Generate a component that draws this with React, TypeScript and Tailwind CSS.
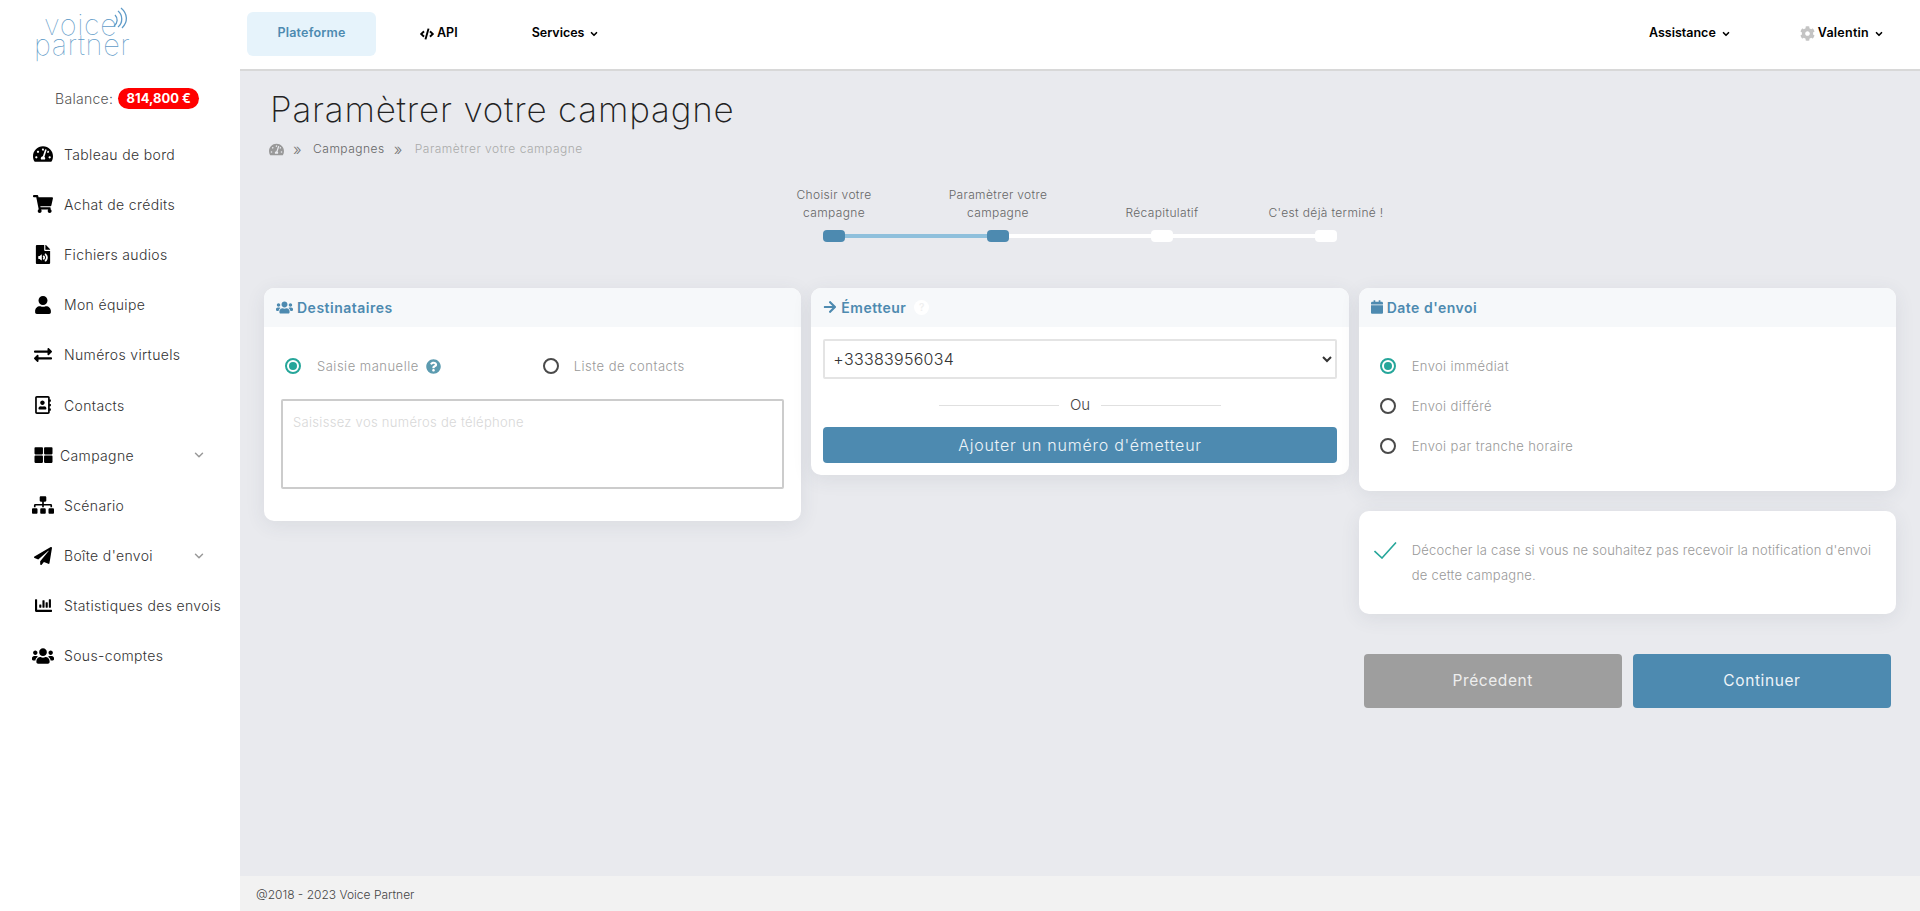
import React from "react";
import { ChevronDown } from "lucide-react";
import {
  FaTachometerAlt, FaShoppingCart, FaFileAudio, FaUser, FaExchangeAlt, FaRegAddressBook, FaThLarge,
  FaSitemap, FaPaperPlane, FaChartBar, FaUsers, FaCode, FaCog, FaQuestionCircle, FaArrowRight, FaCalendar,
} from "react-icons/fa";

const F = "font-['Inter','Liberation_Sans',sans-serif]";

const nav: { icon: React.ReactNode; label: string; chev?: boolean; gap?: string }[] = [
  { icon: <FaTachometerAlt className="w-[20px] h-[20px]" />, label: "Tableau de bord" },
  { icon: <FaShoppingCart className="w-[20px] h-[20px]" />, label: "Achat de crédits" },
  { icon: <FaFileAudio className="w-[16px] h-[19px]" />, label: "Fichiers audios" },
  { icon: <FaUser className="w-[18px] h-[18px]" />, label: "Mon équipe" },
  { icon: <FaExchangeAlt className="w-[18px] h-[18px]" />, label: "Numéros virtuels" },
  { icon: <FaRegAddressBook className="w-[18px] h-[18px]" />, label: "Contacts" },
  { icon: <FaThLarge className="w-[19px] h-[18px]" />, label: "Campagne", chev: true, gap: "w-[28px]" },
  { icon: <FaSitemap className="w-[22px] h-[20px]" />, label: "Scénario" },
  { icon: <FaPaperPlane className="w-[18px] h-[18px]" />, label: "Boîte d'envoi", chev: true },
  { icon: <FaChartBar className="w-[19px] h-[17px]" />, label: "Statistiques des envois" },
  { icon: <FaUsers className="w-[22px] h-[20px]" />, label: "Sous-comptes" },
];

function Radio({ on }: { on?: boolean }) {
  return on ? (
    <span className="w-[16px] h-[16px] rounded-full border-2 border-[#26a69a] flex items-center justify-center shrink-0">
      <span className="w-[8px] h-[8px] rounded-full bg-[#26a69a]" />
    </span>
  ) : (
    <span className="block w-[16px] h-[16px] rounded-full border-2 border-[#4a4a4a] shrink-0" />
  );
}

function Card({ icon, title, extra, children }: { icon: React.ReactNode; title: string; extra?: React.ReactNode; children: React.ReactNode }) {
  return (
    <div className="bg-white rounded-[10px] overflow-hidden shadow-[0_4px_20px_rgba(60,70,90,0.09)]">
      <div className="h-[39px] pb-[1px] bg-[#f6f8fa] flex items-center pl-[12px] gap-[4px] text-[#4d8ab0] text-[14px] font-semibold tracking-[0.5px]">
        {icon}
        <span>{title}</span>
        {extra}
      </div>
      {children}
    </div>
  );
}

const steps = [
  { t: ["Choisir votre", "campagne"], on: true },
  { t: ["Paramètrer votre", "campagne"], on: true },
  { t: ["Récapitulatif"], on: false },
  { t: ["C'est déjà terminé !"], on: false },
];

export default function App() {
  return (
    <div className={`${F} flex h-screen w-full overflow-hidden bg-[#e9eaee] text-[#333]`}>
      <aside className="w-[240px] shrink-0 bg-white flex flex-col">
        <div className="relative h-[88px] pl-[34px] pt-[15px] text-[#5f9bc8] text-[29px] font-thin leading-[20px] tracking-[0.6px]">
          <div className="pl-[10px]">voice</div>
          <div>partner</div>
          <svg className="absolute left-[110px] top-[7px] w-[24px] h-[24px]" viewBox="0 0 24 24" fill="none" stroke="#5f9bc8" strokeWidth="1.3">
            <path d="M4 19 C8 16 8 11 5 8" />
            <path d="M8 20 C13 16 13 8 8 4" />
            <path d="M12 21 C18 15 18 7 11 1" />
          </svg>
        </div>
        <div className="h-[21px] flex items-center pl-[55px] gap-[5px]">
          <span className="text-[14px] font-light text-[#555] tracking-[0.3px]">Balance:</span>
          <span className="w-[81px] h-[21px] rounded-full bg-[#ff0000] text-white text-[13px] font-bold flex items-center justify-center">814,800 €</span>
        </div>
        <nav className="mt-[20px] flex flex-col">
          {nav.map((n) => (
            <div key={n.label} className="h-[50.2px] flex items-center pl-[32px] text-black">
              <span className={`${n.gap ?? "w-[32px]"} shrink-0 flex`}>
                <span className="w-[22px] flex justify-center">{n.icon}</span>
              </span>
              <span className="text-[14px] font-light text-[#333] tracking-[0.35px]">{n.label}</span>
              {n.chev && <ChevronDown className="absolute left-[192px] w-[14px] h-[14px] text-[#999]" strokeWidth={2.5} />}
            </div>
          ))}
        </nav>
      </aside>

      <div className="flex-1 flex flex-col min-w-0">
        <header className="h-[71px] shrink-0 pb-[2px] bg-white border-b-2 border-[#d8d8d8] flex items-center text-[12.5px] font-semibold text-black">
          <div className="ml-[7px] w-[129px] h-[44px] rounded-[6px] bg-[#e6f3fb] text-[#4d8ab0] tracking-[0.2px] flex items-center justify-center">Plateforme</div>
          <div className="ml-[44px] flex items-center gap-[3px]"><FaCode className="w-[14px] h-[14px]" />API</div>
          <div className="ml-[74px] flex items-center gap-[5px]">Services<ChevronDown className="w-[10px] h-[10px]" strokeWidth={4} /></div>
          <div className="ml-auto flex items-center gap-[5px]">Assistance<ChevronDown className="w-[10px] h-[10px]" strokeWidth={4} /></div>
          <div className="ml-[69px] mr-[36px] flex items-center gap-[5px]">
            <span className="flex items-center gap-[3px] tracking-[0.25px]"><FaCog className="w-[15px] h-[15px] text-[#c4c4c4]" />Valentin</span>
            <ChevronDown className="w-[10px] h-[10px]" strokeWidth={4} />
          </div>
        </header>

        <main className="flex-1 flex flex-col min-h-0">
          <h1 className="mt-[18px] ml-[30px] h-[40px] leading-[40px] text-[35px] font-extralight text-[#222] tracking-[0.8px]">Paramètrer votre campagne</h1>
          <div className="mt-[10px] ml-[29px] h-[20px] flex items-center text-[12px] font-light tracking-[0.5px]">
            <FaTachometerAlt className="w-[15px] h-[15px] text-[#999]" />
            <span className="ml-[9px] text-[16px] text-[#777]">»</span>
            <span className="ml-[11px] text-[#666]">Campagnes</span>
            <span className="ml-[9px] text-[16px] text-[#777]">»</span>
            <span className="ml-[12px] text-[#aaa]">Paramètrer votre campagne</span>
          </div>

          <div className="relative mt-[27px] mx-auto w-[656px] flex">
            <div className="absolute left-[82px] top-[48px] w-[164px] h-[4px] bg-[#8fc0dc]" />
            <div className="absolute left-[246px] top-[48px] w-[328px] h-[4px] bg-white" />
            {steps.map((s) => (
              <div key={s.t[0]} className="relative w-[164px] flex flex-col items-center">
                <div className="h-[36px] flex flex-col justify-end items-center text-[12px] leading-[18px] font-light text-[#666] tracking-[0.35px]">
                  {s.t.map((l) => <span key={l}>{l}</span>)}
                </div>
                <div className={`mt-[8px] w-[22px] h-[12px] rounded-[4px] ${s.on ? "bg-[#4d8ab0]" : "bg-white"}`} />
              </div>
            ))}
          </div>

          <div className="mt-[46px] px-[24px] grid grid-cols-3 gap-[10px] items-start">
            <Card icon={<FaUsers className="w-[17px] h-[15px]" />} title="Destinataires">
              <div className="h-[194px] px-[17px] pt-[31px]">
                <div className="flex items-center h-[16px] text-[13px] font-light text-[#999] tracking-[0.5px] pl-[4px]">
                  <Radio on />
                  <span className="ml-[16px] pt-[1px]">Saisie manuelle</span>
                  <FaQuestionCircle className="ml-[7px] w-[15px] h-[15px] text-[#5c9bb0]" />
                  <span className="ml-[102px] block"><Radio /></span>
                  <span className="ml-[15px] pt-[1px]">Liste de contacts</span>
                </div>
                <textarea
                  className="mt-[25px] block w-[503px] h-[90px] border-2 border-[#ccc] rounded-[2px] px-[10px] py-[12px] text-[13px] font-light tracking-[0.3px] resize-none outline-none placeholder:text-[#d8d8d8]"
                  placeholder="Saisissez vos numéros de téléphone"
                />
              </div>
            </Card>

            <Card
              icon={<FaArrowRight className="w-[14px] h-[14px]" />}
              title="Émetteur"
              extra={<span className="ml-[4px] w-[15px] h-[15px] rounded-full bg-white flex items-center justify-center text-[10px] text-[#f0f0f0]">?</span>}
            >
              <div className="px-[12px] pt-[12px] pb-[12px]">
                <select className="w-full h-[40px] bg-white border-2 border-[#e4e4e4] rounded-[2px] pl-[4px] pr-[4px] text-[16px] font-light tracking-[0.3px] text-[#333] outline-none">
                  <option>+33383956034</option>
                </select>
                <div className="mt-[16px] h-[20px] flex items-center justify-center gap-[11px] text-[15px] font-light text-[#444]">
                  <span className="w-[120px] h-px bg-[#e0e0e0]" />
                  <span className="w-[20px] text-center">Ou</span>
                  <span className="w-[120px] h-px bg-[#e0e0e0]" />
                </div>
                <div className="mt-[12px] h-[36px] rounded-[4px] bg-[#4d8ab0] text-[#eef4f8] text-[16px] font-light flex items-center justify-center tracking-[0.75px]">Ajouter un numéro d'émetteur</div>
              </div>
            </Card>

            <div className="flex flex-col">
              <Card icon={<FaCalendar className="w-[12px] h-[14px]" />} title="Date d'envoi">
                <div className="h-[164px] pl-[21px] pt-[31px] flex flex-col gap-[24px] text-[13px] font-light text-[#999] tracking-[0.4px]">
                  {["Envoi immédiat", "Envoi différé", "Envoi par tranche horaire"].map((l, i) => (
                    <div key={l} className="h-[16px] flex items-center gap-[16px]"><Radio on={i === 0} /><span className="pt-[1px]">{l}</span></div>
                  ))}
                </div>
              </Card>
              <div className="mt-[20px] h-[103px] bg-white rounded-[10px] shadow-[0_4px_20px_rgba(60,70,90,0.09)] flex pl-[15px] pr-[20px] pt-[27px]">
                <svg className="w-[23px] h-[17px] shrink-0 mt-[4px]" viewBox="0 0 23 17" fill="none" stroke="#26a69a" strokeWidth="1.6"><path d="M0.5 9 L8 16 L22 0.5" /></svg>
                <p className="ml-[15px] text-[13px] font-light text-[#999] leading-[25px] tracking-[0.24px]">Décocher la case si vous ne souhaitez pas recevoir la notification d'envoi de cette campagne.</p>
              </div>
              <div className="mt-[40px] px-[5px] flex gap-[11px]">
                <div className="flex-1 h-[54px] rounded-[4px] bg-[#9e9e9e] text-[#eee] text-[15.5px] font-normal flex items-center justify-center tracking-[0.6px]">Précedent</div>
                <div className="flex-1 h-[54px] rounded-[4px] bg-[#4d8ab0] text-[#eef4f8] text-[15.5px] font-normal flex items-center justify-center tracking-[0.6px]">Continuer</div>
              </div>
            </div>
          </div>
        </main>

        <footer className="h-[35px] shrink-0 bg-[#f2f2f2] flex items-center pl-[16px] pt-[3px] text-[12px] font-light text-[#444]">@2018 - 2023 Voice Partner</footer>
      </div>
    </div>
  );
}
